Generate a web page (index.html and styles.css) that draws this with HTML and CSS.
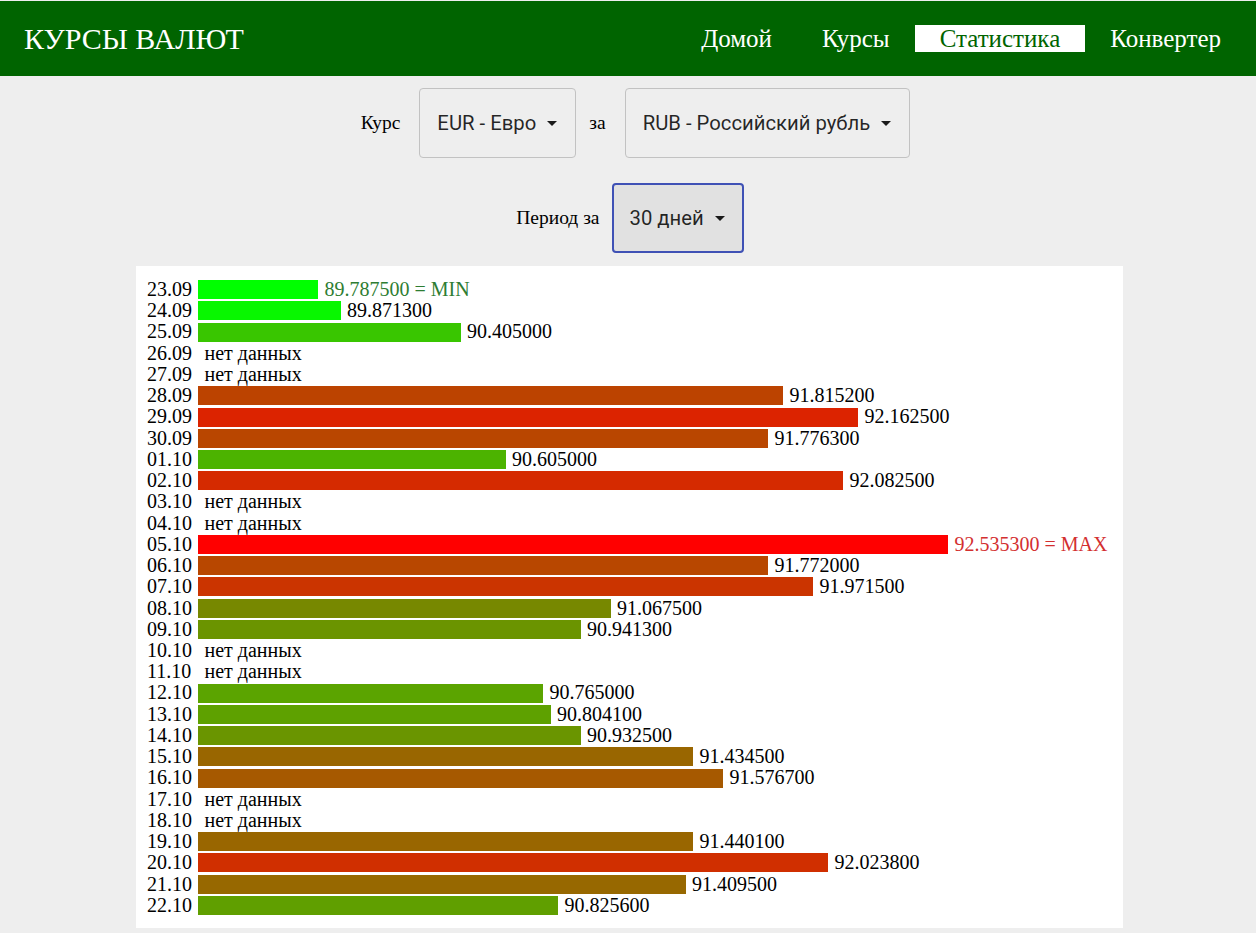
FILE: index.html
```html
<!DOCTYPE html>
<html lang="ru">
<head>
<meta charset="utf-8">
<title>Курсы валют — Статистика</title>
<link rel="stylesheet" href="styles.css">
</head>
<body>
<header class="topbar">
  <div class="brand">КУРСЫ ВАЛЮТ</div>
  <nav class="nav">
    <a class="nav-link" href="#">Домой</a>
    <a class="nav-link" href="#">Курсы</a>
    <a class="nav-link active" href="#">Статистика</a>
    <a class="nav-link" href="#">Конвертер</a>
  </nav>
</header>

<section class="filters">
  <div class="filter-row first">
    <span class="label label-kurs">Курс</span>
    <div class="select"><span class="select-text">EUR - Евро</span><svg class="caret" viewBox="7 10 10 5" width="10" height="5"><path d="M7 10l5 5 5-5z"/></svg></div>
    <span class="label label-za">за</span>
    <div class="select"><span class="select-text">RUB - Российский рубль</span><svg class="caret" viewBox="7 10 10 5" width="10" height="5"><path d="M7 10l5 5 5-5z"/></svg></div>
  </div>
  <div class="filter-row second">
    <span class="label label-period">Период за</span>
    <div class="select focused"><span class="select-text">30 дней</span><svg class="caret" viewBox="7 10 10 5" width="10" height="5"><path d="M7 10l5 5 5-5z"/></svg></div>
  </div>
</section>

<main class="chart">
  <div class="row"><span class="date">23.09</span><div class="track"><div class="bar" style="width:16%;background:rgb(0,255,0)"></div><span class="val min">89.787500 = MIN</span></div></div>
  <div class="row"><span class="date">24.09</span><div class="track"><div class="bar" style="width:19%;background:rgb(8,247,0)"></div><span class="val">89.871300</span></div></div>
  <div class="row"><span class="date">25.09</span><div class="track"><div class="bar" style="width:35%;background:rgb(57,198,0)"></div><span class="val">90.405000</span></div></div>
  <div class="row"><span class="date">26.09</span><div class="track"><span class="val">нет данных</span></div></div>
  <div class="row"><span class="date">27.09</span><div class="track"><span class="val">нет данных</span></div></div>
  <div class="row"><span class="date">28.09</span><div class="track"><div class="bar" style="width:78%;background:rgb(188,67,0)"></div><span class="val">91.815200</span></div></div>
  <div class="row"><span class="date">29.09</span><div class="track"><div class="bar" style="width:88%;background:rgb(220,35,0)"></div><span class="val">92.162500</span></div></div>
  <div class="row"><span class="date">30.09</span><div class="track"><div class="bar" style="width:76%;background:rgb(185,70,0)"></div><span class="val">91.776300</span></div></div>
  <div class="row"><span class="date">01.10</span><div class="track"><div class="bar" style="width:41%;background:rgb(76,179,0)"></div><span class="val">90.605000</span></div></div>
  <div class="row"><span class="date">02.10</span><div class="track"><div class="bar" style="width:86%;background:rgb(213,42,0)"></div><span class="val">92.082500</span></div></div>
  <div class="row"><span class="date">03.10</span><div class="track"><span class="val">нет данных</span></div></div>
  <div class="row"><span class="date">04.10</span><div class="track"><span class="val">нет данных</span></div></div>
  <div class="row"><span class="date">05.10</span><div class="track"><div class="bar" style="width:100%;background:rgb(255,0,0)"></div><span class="val max">92.535300 = MAX</span></div></div>
  <div class="row"><span class="date">06.10</span><div class="track"><div class="bar" style="width:76%;background:rgb(184,71,0)"></div><span class="val">91.772000</span></div></div>
  <div class="row"><span class="date">07.10</span><div class="track"><div class="bar" style="width:82%;background:rgb(203,52,0)"></div><span class="val">91.971500</span></div></div>
  <div class="row"><span class="date">08.10</span><div class="track"><div class="bar" style="width:55%;background:rgb(119,136,0)"></div><span class="val">91.067500</span></div></div>
  <div class="row"><span class="date">09.10</span><div class="track"><div class="bar" style="width:51%;background:rgb(107,148,0)"></div><span class="val">90.941300</span></div></div>
  <div class="row"><span class="date">10.10</span><div class="track"><span class="val">нет данных</span></div></div>
  <div class="row"><span class="date">11.10</span><div class="track"><span class="val">нет данных</span></div></div>
  <div class="row"><span class="date">12.10</span><div class="track"><div class="bar" style="width:46%;background:rgb(91,164,0)"></div><span class="val">90.765000</span></div></div>
  <div class="row"><span class="date">13.10</span><div class="track"><div class="bar" style="width:47%;background:rgb(94,161,0)"></div><span class="val">90.804100</span></div></div>
  <div class="row"><span class="date">14.10</span><div class="track"><div class="bar" style="width:51%;background:rgb(106,149,0)"></div><span class="val">90.932500</span></div></div>
  <div class="row"><span class="date">15.10</span><div class="track"><div class="bar" style="width:66%;background:rgb(153,102,0)"></div><span class="val">91.434500</span></div></div>
  <div class="row"><span class="date">16.10</span><div class="track"><div class="bar" style="width:70%;background:rgb(166,89,0)"></div><span class="val">91.576700</span></div></div>
  <div class="row"><span class="date">17.10</span><div class="track"><span class="val">нет данных</span></div></div>
  <div class="row"><span class="date">18.10</span><div class="track"><span class="val">нет данных</span></div></div>
  <div class="row"><span class="date">19.10</span><div class="track"><div class="bar" style="width:66%;background:rgb(153,102,0)"></div><span class="val">91.440100</span></div></div>
  <div class="row"><span class="date">20.10</span><div class="track"><div class="bar" style="width:84%;background:rgb(208,47,0)"></div><span class="val">92.023800</span></div></div>
  <div class="row"><span class="date">21.10</span><div class="track"><div class="bar" style="width:65%;background:rgb(151,104,0)"></div><span class="val">91.409500</span></div></div>
  <div class="row"><span class="date">22.10</span><div class="track"><div class="bar" style="width:48%;background:rgb(96,159,0)"></div><span class="val">90.825600</span></div></div>
</main>
</body>
</html>
```
FILE: styles.css
```css
html, body {
  margin: 0;
  padding: 0;
}
body {
  background: #eeeeee;
  font-family: "Liberation Serif", "Times New Roman", serif;
  color: #000;
  padding-top: 1px;
}

.topbar {
  height: 75px;
  background: #006400;
  display: flex;
  align-items: center;
  justify-content: space-between;
  padding: 0 10px 0 24px;
}
.brand {
  color: #fff;
  font-size: 30px;
  line-height: 1.15;
  padding-top: 2px;
}
.nav {
  display: flex;
  align-items: center;
}
.nav-link {
  color: #fff;
  font-size: 25px;
  text-decoration: none;
  padding: 0 25px;
  line-height: 27.6px;
}
.nav-link.active {
  background: #fff;
  color: #006400;
}

.filters {
  display: flex;
  flex-direction: column;
  align-items: center;
}
.filter-row {
  display: flex;
  align-items: center;
}
.filter-row.first {
  margin-top: 12px;
  padding-left: 15px;
}
.filter-row.second {
  margin-top: 25px;
  padding-left: 4px;
}
.label {
  font-size: 19.5px;
}
.label-kurs { margin-right: 19px; }
.label-za { margin: 0 19px 0 13px; }
.label-period { margin-right: 12px; }

.select {
  box-sizing: border-box;
  height: 70px;
  display: flex;
  align-items: center;
  border: 1px solid #c2c2c2;
  border-radius: 4px;
  padding: 0 18px 0 17px;
  font-family: Roboto, "Noto Sans", sans-serif;
  font-size: 20.3px;
  color: rgba(0, 0, 0, 0.85);
}
.select.focused {
  border: 2px solid #3f51b5;
  background: #e1e1e1;
  padding: 0 17px 0 16px;
}
.caret {
  margin-left: 11px;
  fill: #1a1a1a;
}

.chart {
  background: #fff;
  width: 987px;
  box-sizing: border-box;
  margin: 13px 133px 5px 136px;
  padding: 13px 10px 12px 11px;
  font-size: 20px;
}
.row {
  display: flex;
  align-items: center;
  height: 21.24px;
  line-height: 21.24px;
  white-space: nowrap;
}
.date {
  width: 51px;
  flex-shrink: 0;
}
.track {
  width: 750px;
  flex-shrink: 0;
  display: flex;
  align-items: center;
}
.bar {
  height: 19px;
  flex-shrink: 0;
}
.val {
  margin-left: 6.5px;
  flex-shrink: 0;
}
.val.min { color: #2e7d32; }
.val.max { color: #d32f2f; }
```
